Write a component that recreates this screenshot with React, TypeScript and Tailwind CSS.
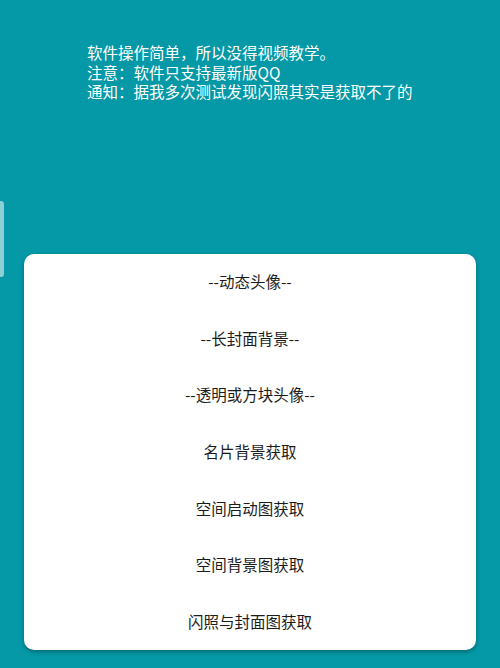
const items = [
  '--动态头像--',
  '--长封面背景--',
  '--透明或方块头像--',
  '名片背景获取',
  '空间启动图获取',
  '空间背景图获取',
  '闪照与封面图获取',
];

export default function App() {
  return (
    <div
      className="relative w-[500px] h-[668px] bg-[#0598a6] overflow-hidden"
      style={{ fontFamily: '"Noto Sans CJK SC", "Noto Sans", sans-serif' }}
    >
      {/* side handle */}
      <div className="absolute left-0 top-[201px] w-[4px] h-[76px] rounded-r-[3px] bg-[#8ccfd5]" />

      <div className="pt-[43px] pl-[87px] text-[15.5px] leading-[19.5px] text-white">
        <p>软件操作简单，所以没得视频教学。</p>
        <p>注意：软件只支持最新版QQ</p>
        <p>通知：据我多次测试发现闪照其实是获取不了的</p>
      </div>

      <div className="mx-[24px] mt-[152px] rounded-[10px] bg-white shadow-[0_2px_4px_rgba(0,0,0,0.3)]">
        {items.map((label) => (
          <div
            key={label}
            className="h-[56.6px] flex items-center justify-center text-[15.5px] text-[#1c1c1c]"
          >
            {label}
          </div>
        ))}
      </div>
    </div>
  );
}
